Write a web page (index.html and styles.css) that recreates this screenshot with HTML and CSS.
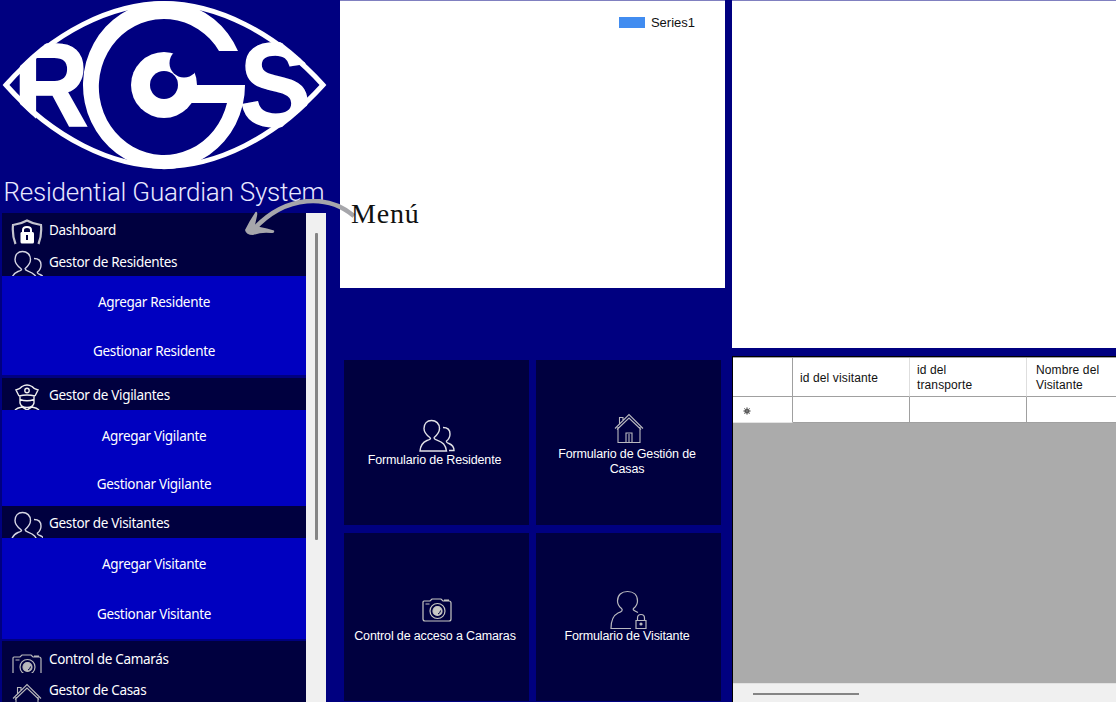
FILE: index.html
```html
<!DOCTYPE html>
<html lang="es">
<head>
<meta charset="utf-8">
<title>Residential Guardian System</title>
<link rel="stylesheet" href="styles.css">
</head>
<body>
<svg class="defs" width="0" height="0">
  <symbol id="people" viewBox="0 0 36 33"><g fill="none" stroke="currentColor" stroke-width="1.4"><path d="M10.800 18.500C7.500 16 5 13.500 5 9.500C5 4.500 8 1.500 12.500 1.500S20.500 4.500 20.500 9.500C20.500 13.500 18 16 15.200 18.500Q14.800 20 18 21.200C24 23.400 26.500 25.500 27.500 32H1C1.500 25.500 4.500 23 8 21.500Q13 20 10.800 18.500"/><path d="M24 8.500C29 8.500 31 11.500 31 15C31 18.500 29.500 20.500 27.500 22Q27 23.500 30 24.500C33.500 26 35 28 35 31.500H30"/></g></symbol>
  <symbol id="house" viewBox="0 0 30 30"><g fill="none" stroke="currentColor" stroke-width="1.1"><path d="M1 15.500L15 1.500L29 15.500M3 16.500L15 5L27 16.500M4 14V29.500H26V14M5.500 10.500V4.500H9V7M12 29V20H18V29M15 21V29"/></g></symbol>
  <symbol id="camera" viewBox="0 0 30 24"><g fill="none" stroke="currentColor" stroke-width="1.200"><path d="M2 3H8L10 1H19L21 3H27Q29 3 29 5V21Q29 23 27 23H3Q1 23 1 21V4Q1 3 2 3M22 2H27M3.500 6H7.500"/><circle cx="15.500" cy="13" r="7.500"/><circle cx="15.500" cy="13" r="4.500" fill="currentColor"/></g><path d="M16 16Q18.500 15 18.500 12.500" stroke="#00003f" fill="none"/></symbol>
  <symbol id="user-lock" viewBox="0 0 38 40"><g fill="none" stroke="currentColor" stroke-width="1.200"><path d="M21 38.500H1C1 29 4 25 8 23Q14 21 11.500 18.500C8.500 16 7.500 14 7.500 11C7.500 5 11.500 1.500 17.500 1.500S27.500 5 27.500 11C27.500 14 26.500 16 23.500 18.500Q22 20 28 22.500"/><path d="M26 30.500H36V38.500H26ZM27.500 30V28Q27.500 24.500 31 24.500T34.500 28V30"/></g><circle cx="31" cy="34" r="1.600" fill="currentColor"/></symbol>
  <symbol id="shield" viewBox="0 0 32 27"><path d="M4.500 26Q1 17 2 7Q10 6 16 2.500Q22 6 30 7Q31 17 27.500 26" fill="none" stroke="currentColor" stroke-width="2.200"/><path d="M10.500 14H21.500Q23 14 23 15.500V24Q23 25.500 21.500 25.500H11Q9.500 25.500 9.500 24V15.500Q9.500 14 10.500 14Z" fill="#fff"/><path d="M12 14V12Q12 9 16 9T20 12V14" fill="none" stroke="#fff" stroke-width="2"/><path d="M16 17V22" stroke="#00003f" stroke-width="2"/></symbol>
  <symbol id="guard" viewBox="0 0 26 27"><g fill="none" stroke="currentColor" stroke-width="1.400"><path d="M5 13L2 7Q6 6 8 3.500Q13 .5 18 3.500Q20 6 24 7L21 13M5 13Q13 11 21 13M6 13V20Q7 24.500 13 24.500T20 20V13M6 16.500Q13 19 20 16.500M1 27Q3 25 8 24L13 27L18 24Q23 25 25 27"/><circle cx="13" cy="7.500" r="2.200"/></g></symbol>
</svg>
<main class="app">
  <aside class="sidebar">
    <svg class="logo" viewBox="0 0 340 213">
      <clipPath id="eye"><path d="M3 85C50 28 110 1 164 1S278 28 326 85C278 142 218 169 164 169S50 142 3 85Z"/></clipPath>
      <path d="M6 85C53 32 112 3.500 164 3.500S275 32 323 85C275 138 216 166.500 164 166.500S53 138 6 85Z" fill="none" stroke="#fff" stroke-width="5"/>
      <g clip-path="url(#eye)" fill="#fff" class="logo-letters">
        <text transform="translate(13.500 125.500) scale(.88 1)">R</text>
        <text transform="translate(239.500 125.500) scale(.91 1)">S</text>
      </g>
      <path d="M238 51A81 84 0 1 0 245 85H191V103H227A65 68 0 1 1 219 51Z" fill="#fff"/>
      <circle cx="164" cy="85" r="33" fill="#fff"/>
      <circle cx="184" cy="63" r="14.500" fill="#000080"/>
      <circle cx="164" cy="85" r="14" fill="#000080"/>
      <text class="logo-name" x="3.500" y="200.500" textLength="321">Residential Guardian System</text>
    </svg>
    <div class="menu-wrap">
      <nav class="menu">
        <div class="item"><svg class="ico shield"><use href="#shield"/></svg><span>Dashboard</span></div>
        <div class="item short"><svg class="ico people"><use href="#people" width="36" height="33"/></svg><span>Gestor de Residentes</span></div>
        <div class="sub sub-a"><span>Agregar Residente</span><span>Gestionar Residente</span></div>
        <div class="item"><svg class="ico guard"><use href="#guard"/></svg><span>Gestor de Vigilantes</span></div>
        <div class="sub sub-b"><span>Agregar Vigilante</span><span>Gestionar Vigilante</span></div>
        <div class="item"><svg class="ico people"><use href="#people" width="36" height="33"/></svg><span>Gestor de Visitantes</span></div>
        <div class="sub sub-c"><span>Agregar Visitante</span><span>Gestionar Visitante</span></div>
        <div class="item"><svg class="ico camera"><use href="#camera" width="30" height="24"/></svg><span class="low">Control de Camarás</span></div>
        <div class="item short"><svg class="ico house"><use href="#house"/></svg><span>Gestor de Casas</span></div>
      </nav>
      <div class="scroll-y"><div class="thumb-y"></div></div>
    </div>
  </aside>
  <section class="center">
    <div class="chart"><div class="legend"><i class="swatch"></i><span>Series1</span></div></div>
    <div class="cards">
      <div class="card c1"><svg width="36" height="33"><use href="#people"/></svg><span>Formulario de Residente</span></div>
      <div class="card c2"><svg width="30" height="30"><use href="#house"/></svg><span>Formulario de Gestión de<br>Casas</span></div>
      <div class="card c3"><svg width="30" height="24"><use href="#camera"/></svg><span>Control de acceso a Camaras</span></div>
      <div class="card c4"><svg width="38" height="40"><use href="#user-lock"/></svg><span>Formulario de Visitante</span></div>
    </div>
  </section>
  <section class="right">
    <div class="panel"></div>
    <div class="grid">
      <div class="row head"><div class="cell"></div><div class="cell">id del visitante</div><div class="cell">id del<br>transporte</div><div class="cell">Nombre del<br>Visitante</div></div>
      <div class="row body"><div class="cell mark"><svg width="8" height="8" viewBox="0 0 8 8"><circle cx="4" cy="4" r="2.600" fill="#444"/><path d="M4 0V8M0 4H8M1 1L7 7M7 1L1 7" stroke="#777" stroke-width=".8"/></svg></div><div class="cell"></div><div class="cell"></div><div class="cell"></div></div>
      <div class="empty"></div>
      <div class="scroll-x"><div class="thumb-x"></div></div>
    </div>
  </section>
  <div class="note">
    <svg width="112" height="42" viewBox="0 0 112 42"><path d="M8 31C42 -6 84 -4 109 17" fill="none" stroke="#a6a6ab" stroke-width="4.600"/><path d="M10.500 13Q13 12 12 17L10 26L15 28Q22 29 29 31.500Q30 34 26 34Q16 33 8 36Q1 36 0 31Q5 21 10.500 13Z" fill="#a6a6ab"/></svg>
    <span>Menú</span>
  </div>
</main>
</body>
</html>
```
FILE: styles.css
```css
* { box-sizing: border-box; }
body { margin: 0; background: #000080; overflow: hidden; }
.defs { position: absolute; }
.app {
  position: relative; width: 1116px; height: 702px; overflow: hidden;
  display: grid; grid-template-columns: 333px 385px 384px; column-gap: 7px;
  background: #000080; font-family: "Liberation Sans", Arial, sans-serif;
}
.sidebar { display: flex; flex-direction: column; width: 340px; }
.logo { display: block; width: 340px; height: 213px; }
.logo-letters { font: bold 118px "Liberation Sans", Arial, sans-serif; stroke: #fff; stroke-width: 1.500px; }
.logo-name { font: 300 26px Roboto, "Liberation Sans", sans-serif; fill: #e8e8ff; }
.menu-wrap { display: flex; height: 489px; padding-left: 2px; }
.menu {
  width: 304px; overflow: hidden; color: #fff;
  font: 13.500px/18px "Noto Sans", "Open Sans", sans-serif; letter-spacing: -.32px;
}
.item { display: flex; height: 32px; background: #00003f; overflow: hidden; }
.item span { padding-top: 8px; white-space: nowrap; }
.item .low { padding-top: 9px; }
.item.short { height: 31px; }
.ico { flex: none; width: 30px; height: 25px; margin: 6px 8px 0 9px; color: #d6d6e4; }
.ico.shield { width: 32px; height: 27px; margin: 5px 6px 0 9px; color: #c4c4ce; }
.ico.people { width: 33px; height: 33px; margin: 5px 6px 0 8px; }
.ico.guard { width: 26px; height: 27px; margin: 5px 9px 0 12px; color: #f0f0f0; }
.ico.camera { height: 19px; margin: 13px 7px 0 10px; color: #b9b9bc; }
.ico.house { height: 30px; margin: 10px 7px 0 10px; color: #b9b9bc; }
.sub { display: flex; flex-direction: column; align-items: center; background: #0000c0; }
.sub-a { height: 99px; margin-bottom: 3px; padding-top: 17px; gap: 31px; }
.sub-b { height: 96px; padding-top: 17px; gap: 30px; }
.sub-c { height: 101px; margin-bottom: 2px; padding-top: 17px; gap: 32px; }
.scroll-y { width: 20px; background: #f0f0f0; padding: 20px 0 0 9px; }
.thumb-y { width: 3px; height: 307px; background: #858585; border-radius: 1px; }

.center { display: flex; flex-direction: column; gap: 72px; }
.chart { height: 288px; background: #fff; border-top: 1px solid #8080c0; padding: 14px 30px 0 0; }
.legend { display: flex; justify-content: flex-end; align-items: center; gap: 6px; font-size: 13px; line-height: 16px; color: #111; }
.swatch { width: 26px; height: 11px; margin-bottom: 2px; background: #418cf0; }
.cards { display: grid; grid-template: 165px 168px / 185px 185px; gap: 8px 7px; padding-left: 4px; }
.card {
  display: flex; flex-direction: column; align-items: center; background: #00003f;
  color: #fff; font-size: 12.500px; line-height: 15px; letter-spacing: -.14px; text-align: center; white-space: nowrap;
}
.card svg { color: #b9b9bf; flex: none; }
.c1 { padding-top: 59px; }
.c1 svg { color: #e0e0e6; }
.c1 span { padding-top: 1px; }
.c2 { padding-top: 53px; }
.c2 span { padding: 4px 3px 0 0; }
.c3 { padding-top: 65px; }
.c3 svg { color: #c8c8c4; }
.c3 span { padding: 7px 3px 0 0; }
.c4 { padding-top: 57px; }
.c4 span { margin-top: -1px; padding-right: 3px; }
.c1 span { padding-right: 4px; }

.right { display: flex; flex-direction: column; }
.panel { height: 348px; background: #fff; border-top: 1px solid #8080c0; }
.grid {
  display: flex; flex-direction: column; height: 346px; margin-top: 8px;
  border-left: 1px solid #000; border-top: 1px solid #000;
}
.row { display: grid; grid-template-columns: 60px 117px 117px 1fr; background: #fff; font-size: 12px; line-height: 15px; letter-spacing: .12px; color: #111; }
.cell { display: flex; align-items: center; padding-left: 7px; border-right: 1px solid #a0a0a0; border-bottom: 1px solid #a0a0a0; white-space: nowrap; }
.cell:last-child { border-right: 0; padding-left: 9px; }
.head { height: 40px; border-top: 1px solid #a0a0a0; }
.head .cell { border-right-color: #dedede; padding-top: 2px; }
.head .cell:first-child { border-right-color: #a0a0a0; }
.body { height: 26px; }
.body .mark { padding: 2px 0 0 10px; border-bottom-color: #e4e4e4; }
.empty { flex: 1; background: #ababab; }
.scroll-x { height: 19px; background: #f0f0f0; border-top: 1px solid #e2e2e2; padding: 9px 0 0 20px; }
.thumb-x { width: 106px; height: 2px; background: #858585; }

/* callout drawn over the menu and chart */
.note { position: absolute; left: 245px; top: 199px; display: flex; }
.note span { margin-left: -6px; font: 28px/30px "Liberation Serif", serif; letter-spacing: .8px; color: #111; }
```
